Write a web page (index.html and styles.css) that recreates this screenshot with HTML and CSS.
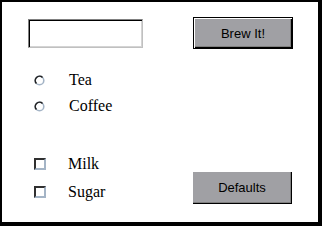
FILE: index.html
```html
<!DOCTYPE html>
<html>
<head>
<meta charset="utf-8">
<link rel="stylesheet" href="styles.css">
</head>
<body>
<div class="frame">
  <div class="left">
    <input class="textbox" type="text">
    <div class="row row-first"><svg class="radio" width="11" height="11" viewBox="0 0 11 11"><circle cx="5.5" cy="5.5" r="4.3" fill="#fff" stroke="#a4b4c6" stroke-width="1.6"/><path d="M2.46 8.54 A4.3 4.3 0 0 1 8.54 2.46" fill="none" stroke="#222" stroke-width="1.6"/></svg><span class="label">Tea</span></div>
    <div class="row"><svg class="radio" width="11" height="11" viewBox="0 0 11 11"><circle cx="5.5" cy="5.5" r="4.3" fill="#fff" stroke="#a4b4c6" stroke-width="1.6"/><path d="M2.46 8.54 A4.3 4.3 0 0 1 8.54 2.46" fill="none" stroke="#222" stroke-width="1.6"/></svg><span class="label">Coffee</span></div>
    <div class="row row-gap"><span class="check"></span><span class="label">Milk</span></div>
    <div class="row row-tight"><span class="check"></span><span class="label">Sugar</span></div>
  </div>
  <div class="right">
    <button class="btn btn-default">Brew It!</button>
    <button class="btn btn-lower">Defaults</button>
  </div>
</div>
</body>
</html>
```
FILE: styles.css
```css
html, body {
  margin: 0;
  padding: 0;
  background: #ffffff;
}
.frame {
  box-sizing: border-box;
  width: 322px;
  height: 226px;
  border-style: solid;
  border-color: #000;
  border-width: 2px 4px 4px 2px;
  background: #fff;
  display: flex;
  padding: 15px 0 0 26px;
}
.left {
  width: 164px;
  display: flex;
  flex-direction: column;
}
.textbox {
  box-sizing: border-box;
  width: 115px;
  height: 29px;
  margin: 2px 0 0 0;
  padding: 0;
  border-style: solid;
  border-width: 1px;
  border-color: #808080 #c0c0c0 #c0c0c0 #808080;
  box-shadow: inset 1px 1px 0 #000, inset -1px -1px 0 #d4d4d4;
  background: #fff;
  outline: none;
}
.row {
  height: 26px;
  display: flex;
  align-items: center;
  font-family: "Liberation Serif", "Times New Roman", serif;
  font-size: 16px;
  color: #000;
}
.row-first { margin-top: 19px; }
.row-gap { margin-top: 32px; }
.row-tight { margin-top: 2px; }
.radio {
  display: block;
  margin-left: 6px;
  margin-right: 24px;
}
.check {
  box-sizing: border-box;
  width: 12px;
  height: 12px;
  margin-left: 6px;
  margin-right: 22px;
  border-style: solid;
  border-width: 2px;
  border-color: #303030 #a4b4c6 #a4b4c6 #303030;
  background: #fff;
}
.right {
  display: flex;
  flex-direction: column;
  align-items: flex-start;
}
.btn {
  box-sizing: border-box;
  width: 100px;
  height: 33px;
  padding: 0;
  margin: 0;
  background: #a0a0a4;
  font-family: "Liberation Sans", Arial, sans-serif;
  font-size: 13px;
  color: #000;
  border: none;
  box-shadow: inset 1px 1px 0 #ffffff, inset -1px -1px 0 #000, inset -2px -2px 0 #808080;
}
.btn-default {
  height: 32px;
  margin-left: 1px;
  border: 1px solid #000;
}
.btn-lower {
  margin-top: 122px;
}
```
